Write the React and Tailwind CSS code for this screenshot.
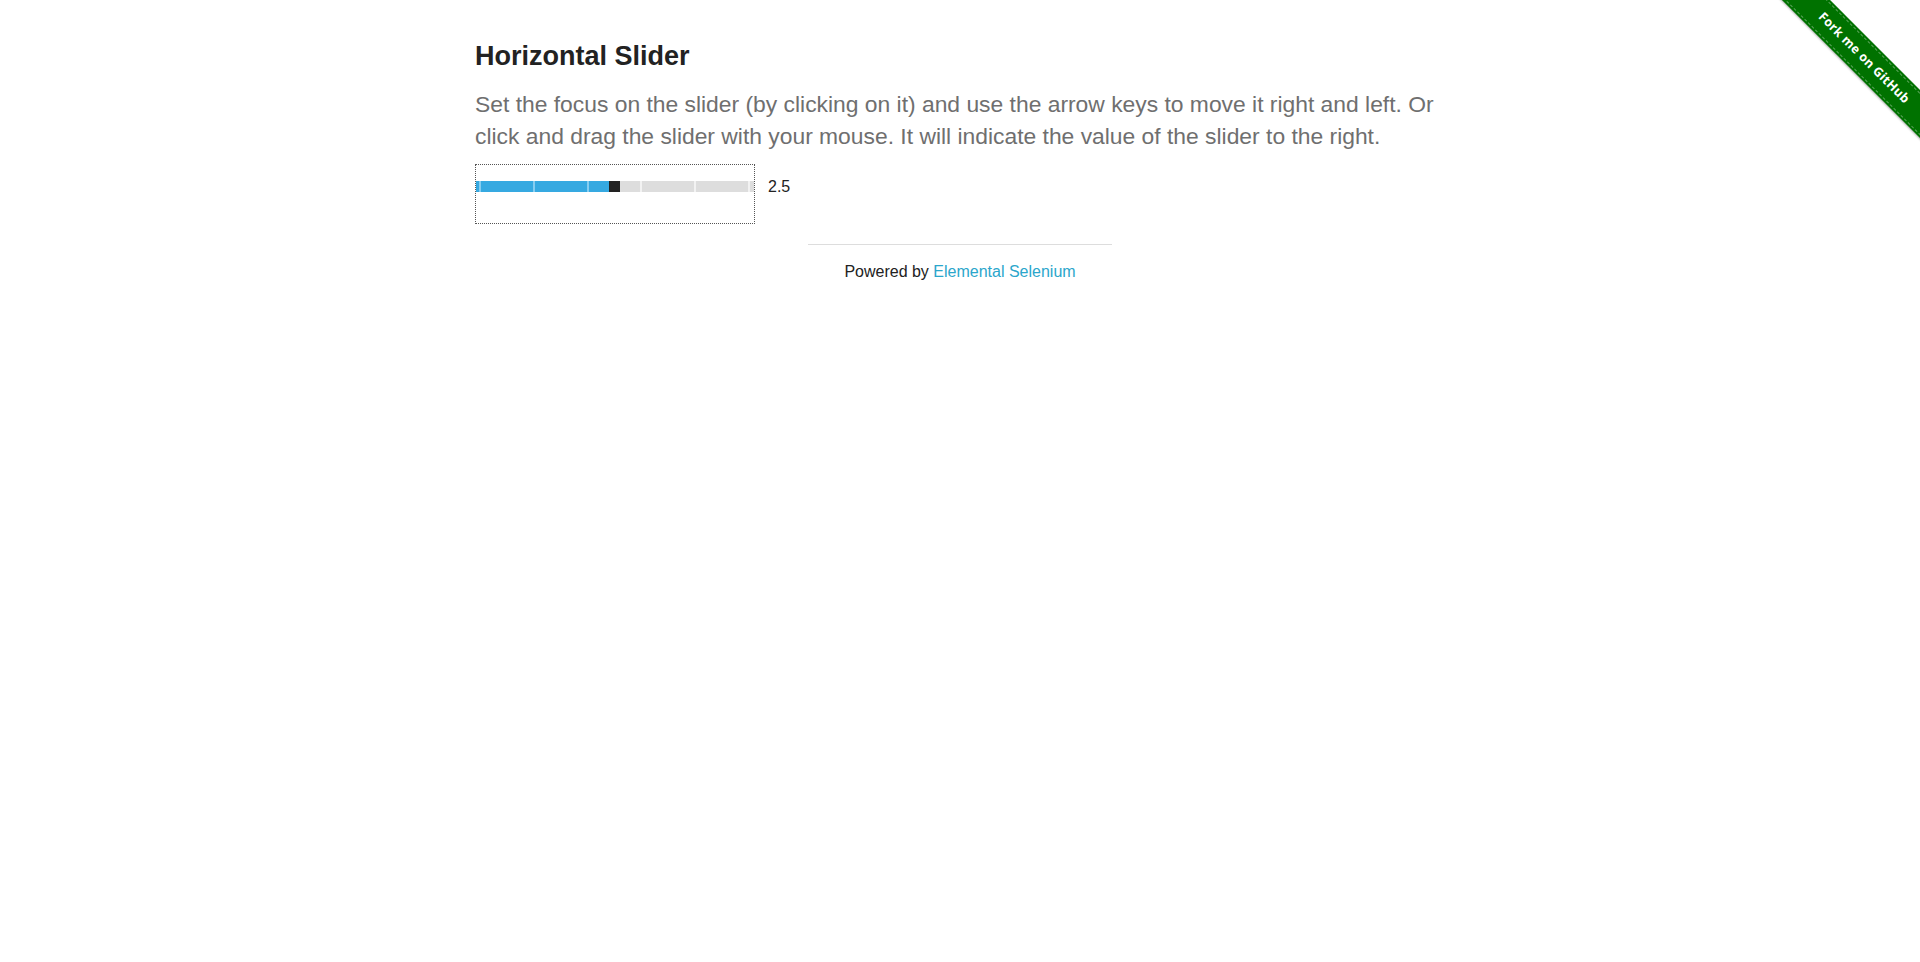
import React from "react";

export default function App() {
  const ticks = [3, 57, 111, 164, 218, 272];
  const thumbLeft = 133;
  return (
    <div className="relative min-h-screen bg-white font-['Liberation_Sans',Arial,sans-serif]">
      {/* Fork me ribbon */}
      <div className="pointer-events-none absolute right-0 top-0 h-[149px] w-[149px] overflow-hidden">
        <div className="absolute left-[-37px] top-[41px] h-[34px] w-[260px] rotate-45 bg-[#007200] py-[2px] shadow-[0_1px_2px_rgba(0,0,0,0.3)]">
          <div className="flex h-full w-full items-center justify-center border-y border-dashed border-[rgba(255,255,255,0.35)]">
            <span className="font-['Open_Sans',sans-serif] text-[12.5px] font-bold tracking-[0.3px] text-white">
              Fork me on GitHub
            </span>
          </div>
        </div>
      </div>

      <div className="mx-auto w-[1000px] px-[15px] pt-[39px]">
        <h3 className="text-[27px] font-bold leading-[34px] text-[#222222]">Horizontal Slider</h3>
        <p className="mt-[15px] text-[22.85px] leading-[32px] text-[#6f6f6f]">
          Set the focus on the slider (by clicking on it) and use the arrow keys to move it right and left. Or
          click and drag the slider with your mouse. It will indicate the value of the slider to the right.
        </p>
        <div className="mt-[12px] flex items-start">
          <div className="h-[60px] w-[280px] border border-dotted border-[#555555] pt-[16px]">
            <div className="relative flex h-[11px] w-full">
              <div className="h-full bg-[#36a9e1]" style={{ width: thumbLeft }} />
              <div className="h-full w-[11px] bg-[#222222]" />
              <div className="h-full flex-1 bg-[#dddddd]" />
              {ticks.map((t) => (
                <div
                  key={t}
                  className={
                    t < thumbLeft
                      ? "absolute top-0 h-full w-[2px] bg-[#86cdf0]"
                      : "absolute top-0 h-full w-[2px] bg-[#f2f2f2]"
                  }
                  style={{ left: t }}
                />
              ))}
            </div>
          </div>
          <span className="ml-[13px] mt-[14px] text-[16px] leading-[18px] text-[#222222]">2.5</span>
        </div>
      </div>

      <div className="mx-auto mt-[20px] w-[304px] border-t border-[#dddddd]" />
      <div className="mt-[15px] text-center text-[16px] leading-[24px] text-[#222222]">
        Powered by <a className="text-[#2ba6cb]">Elemental Selenium</a>
      </div>
    </div>
  );
}
